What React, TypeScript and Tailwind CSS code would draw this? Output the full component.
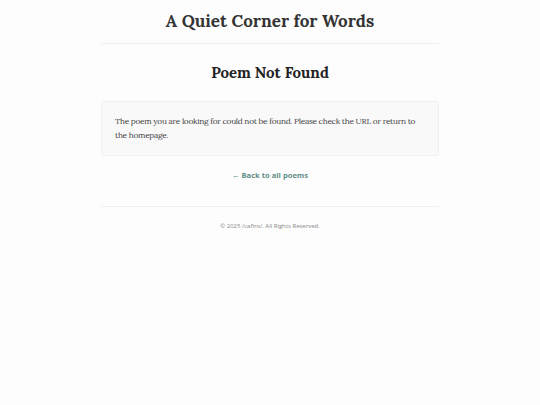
export default function App() {
  return (
    <div className="min-h-screen bg-[#fdfdfd] text-[#333]">
      <div className="mx-auto w-[338px] pt-[9px]">
        <header className="border-b border-[#eeeeee] pb-[9px] text-center">
          <h1 className="font-['Lora','Liberation_Serif',serif] text-[17px] font-bold leading-[25px] text-[#333]">
            A Quiet Corner for Words
          </h1>
        </header>

        <main className="pt-[18px]">
          <h2 className="text-center font-['Lora','Liberation_Serif',serif] text-[15px] font-bold leading-[22px] text-[#222]">
            Poem Not Found
          </h2>

          <div className="mt-[17px] rounded-[3px] border border-[#f0f0f0] bg-[#f9f9f9] px-[13px] pt-[12px] pb-[13px]">
            <p className="font-['Lora','Liberation_Serif',serif] text-[8.3px] leading-[14px] tracking-[-0.28px] text-[#444]">
              The poem you are looking for could not be found. Please check the URL or return to the homepage.
            </p>
          </div>

          <div className="mt-[4px] text-center">
            <a href="#" className="font-['Open_Sans',sans-serif] text-[7.6px] font-bold text-[#5f8f86]">
              ← Back to all poems
            </a>
          </div>
        </main>

        <footer className="mt-[22px] border-t border-[#f0f0f0] pt-[15px] text-center">
          <p className="font-['Open_Sans',sans-serif] text-[6px] text-[#888]">
            © 2025 /cafiro/. All Rights Reserved.
          </p>
        </footer>
      </div>
    </div>
  );
}
